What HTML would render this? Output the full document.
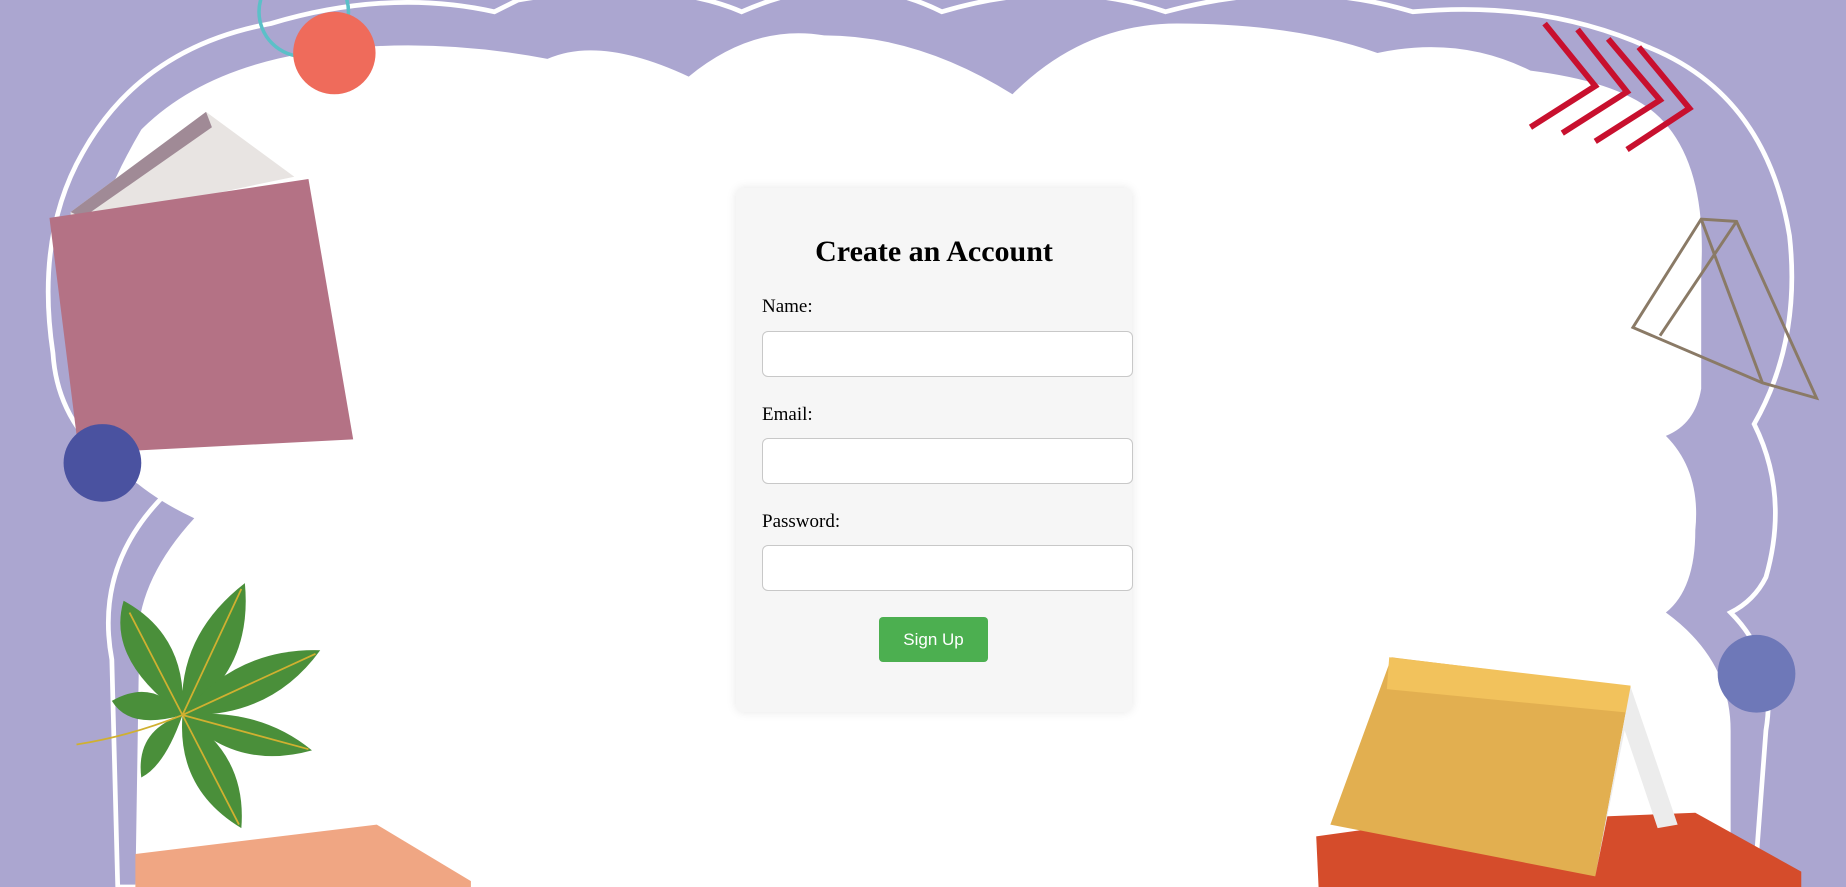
<!DOCTYPE html>
<html><head><meta charset="utf-8"><style>
html,body{margin:0;padding:0;width:1846px;height:887px;overflow:hidden;background:#aba6d0}
svg.bg{position:absolute;left:0;top:0}
.card{position:absolute;left:736px;top:188px;width:396px;height:524px;background:#f6f6f6;border-radius:8px;box-shadow:0 0 10px rgba(0,0,0,0.1);font-family:"Liberation Serif",serif}
h2{position:absolute;left:0;width:396px;top:47px;margin:0;text-align:center;font-size:30px;line-height:34px;font-weight:bold;color:#000}
.lbl{position:absolute;left:26px;font-size:19px;line-height:22px;color:#000}
.inp{position:absolute;left:26px;width:369px;height:44px;background:#fff;border:1px solid #c8c8c8;border-radius:6px}
.btn{position:absolute;left:143px;top:429px;width:109px;height:45px;background:#4caf50;border-radius:4px;color:#fff;font-family:"Liberation Sans",sans-serif;font-size:17px;text-align:center;line-height:45px}
</style></head><body>
<svg class="bg" width="1846" height="887" viewBox="0 0 1568 753" preserveAspectRatio="none">
<rect width="1568" height="753" fill="#aba6d0"/>
<path d="M100,753 L95,560 Q80,480 140,420 Q50,380 45,300 Q30,200 70,130 Q120,40 230,20 Q330,-10 420,10 L440,0 Q560,-20 630,10 Q720,-30 800,10 Q900,-20 990,10 Q1100,-20 1200,10 Q1310,0 1400,40 Q1500,80 1520,200 Q1530,290 1490,360 Q1520,420 1500,490 Q1490,510 1470,520 Q1510,560 1500,620 L1490,753 Z" fill="none" stroke="#fff" stroke-width="4"/>
<path d="M115,753 L118,560 Q110,500 165,440 Q80,400 65,330 Q55,220 120,110 Q170,60 260,45 Q360,30 465,50 Q510,30 585,65 Q640,20 700,30 Q780,30 860,80 Q920,20 1000,20 Q1100,20 1170,45 Q1240,30 1300,60 Q1380,70 1410,100 Q1450,140 1445,230 L1445,330 Q1440,360 1415,370 Q1445,400 1440,450 Q1440,500 1415,520 Q1470,560 1470,620 L1470,753 Z" fill="#fff"/>
<circle cx="258" cy="10" r="38" fill="none" stroke="#5bc0c8" stroke-width="3"/>
<circle cx="284" cy="45" r="35" fill="#ef6b5b"/>
<path d="M60,180 L175,95 L250,150 L60,190 Z" fill="#e8e4e2"/>
<path d="M60,180 L175,95 L180,108 L70,185Z" fill="#a08a96"/>
<polygon points="42,185 262,152 300,373 67,385" fill="#b47285"/>
<circle cx="87" cy="393" r="33" fill="#4a52a0"/>
<g fill="#4a8f3a"><path d="M155,607 Q90,560 105,510 Q160,540 155,607Z"/><path d="M155,607 Q150,540 208,495 Q215,570 155,607Z"/><path d="M155,607 Q200,550 272,552 Q230,610 155,607Z"/><path d="M155,607 Q220,600 265,637 Q200,655 155,607Z"/><path d="M155,607 Q210,640 205,703 Q150,670 155,607Z"/><path d="M155,607 Q110,620 95,595 Q130,575 155,607Z"/><path d="M155,607 Q140,650 120,660 Q115,620 155,607Z"/></g>
<g stroke="#d0b030" stroke-width="1.5" fill="none"><path d="M155,607 Q110,625 65,632"/><path d="M155,607 L110,520 M155,607 L205,500 M155,607 L268,555 M155,607 L262,636 M155,607 L203,700"/></g>
<polygon points="115,725 320,700 400,748 400,753 115,753" fill="#f0a683"/>
<g stroke="#c8102e" stroke-width="5" fill="none"><path d="M1312,20 L1355,73 L1300,108"/><path d="M1340,25 L1382,78 L1327,113"/><path d="M1366,33 L1410,85 L1355,120"/><path d="M1392,40 L1435,92 L1382,127"/></g>
<g stroke="#8a7a66" stroke-width="2.5" fill="none"><path d="M1387,278 L1445,186 L1475,188 L1543,338 L1497,325 Z"/><path d="M1445,186 L1497,325"/><path d="M1475,188 L1410,285"/></g>
<circle cx="1492" cy="572" r="33" fill="#6e78b8"/>
<polygon points="1118,710 1190,700 1440,690 1530,740 1530,753 1120,753" fill="#d54c2b"/>
<polygon points="1130,700 1182,558 1385,583 1355,744" fill="#e2af50"/>
<polygon points="1180,558 1385,582 1383,605 1178,585" fill="#f2c25c"/>
<polygon points="1385,583 1425,700 1408,703 1380,620 1355,744" fill="#ececec"/>
</svg>
<div class="card">
<h2>Create an Account</h2>
<div class="lbl" style="top:108px">Name:</div>
<div class="inp" style="top:143px"></div>
<div class="lbl" style="top:216px">Email:</div>
<div class="inp" style="top:250px"></div>
<div class="lbl" style="top:323px">Password:</div>
<div class="inp" style="top:357px"></div>
<div class="btn">Sign Up</div>
</div>
</body></html>
